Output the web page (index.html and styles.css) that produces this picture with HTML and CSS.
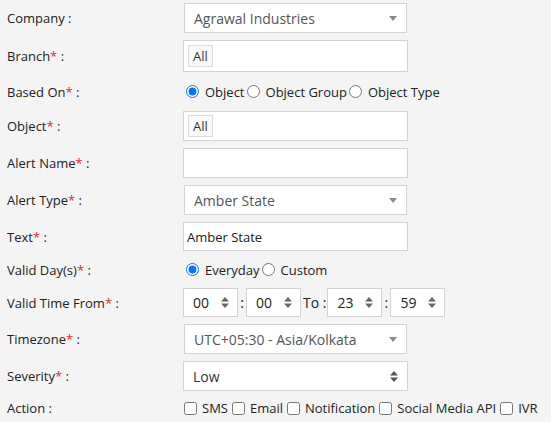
FILE: index.html
```html
<!DOCTYPE html>
<html>
<head>
<meta charset="utf-8">
<link rel="stylesheet" href="styles.css">
</head>
<body>
<form class="form">
  <div class="row h30">
    <span class="lbl">Company :</span>
    <div class="select"><span>Agrawal Industries</span><svg class="caret" width="8" height="5" viewBox="0 0 8 5"><path d="M0 0H8L4 5Z"/></svg></div>
  </div>
  <div class="row h32">
    <span class="lbl">Branch<span class="req">*</span> :</span>
    <div class="input tags"><span class="tag">All</span></div>
  </div>
  <div class="row h25">
    <span class="lbl">Based On<span class="req">*</span> :</span>
    <div class="choices">
      <label class="choice"><input type="radio" name="based" checked>Object</label>
      <label class="choice"><input type="radio" name="based">Object Group</label>
      <label class="choice"><input type="radio" name="based">Object Type</label>
    </div>
  </div>
  <div class="row h30">
    <span class="lbl">Object<span class="req">*</span> :</span>
    <div class="input tags"><span class="tag">All</span></div>
  </div>
  <div class="row h30">
    <span class="lbl">Alert Name<span class="req">*</span> :</span>
    <div class="input"></div>
  </div>
  <div class="row h30">
    <span class="lbl">Alert Type<span class="req">*</span> :</span>
    <div class="select"><span>Amber State</span><svg class="caret" width="8" height="5" viewBox="0 0 8 5"><path d="M0 0H8L4 5Z"/></svg></div>
  </div>
  <div class="row h29">
    <span class="lbl">Text<span class="req">*</span> :</span>
    <div class="input text">Amber State</div>
  </div>
  <div class="row h23">
    <span class="lbl">Valid Day(s)<span class="req">*</span> :</span>
    <div class="choices">
      <label class="choice"><input type="radio" name="day" checked>Everyday</label>
      <label class="choice"><input type="radio" name="day">Custom</label>
    </div>
  </div>
  <div class="row h29">
    <span class="lbl">Valid Time From<span class="req">*</span> :</span>
    <div class="time">
      <div class="num">00<svg class="spin" width="8" height="11" viewBox="0 0 8 11"><path d="M4 0L8 4.5H0Z M4 11L8 6.5H0Z"/></svg></div>
      <span class="sep">:</span>
      <div class="num">00<svg class="spin" width="8" height="11" viewBox="0 0 8 11"><path d="M4 0L8 4.5H0Z M4 11L8 6.5H0Z"/></svg></div>
      <span class="to">To :</span>
      <div class="num">23<svg class="spin" width="8" height="11" viewBox="0 0 8 11"><path d="M4 0L8 4.5H0Z M4 11L8 6.5H0Z"/></svg></div>
      <span class="sep">:</span>
      <div class="num">59<svg class="spin" width="8" height="11" viewBox="0 0 8 11"><path d="M4 0L8 4.5H0Z M4 11L8 6.5H0Z"/></svg></div>
    </div>
  </div>
  <div class="row h30">
    <span class="lbl">Timezone<span class="req">*</span> :</span>
    <div class="select"><span>UTC+05:30 - Asia/Kolkata</span><svg class="caret" width="8" height="5" viewBox="0 0 8 5"><path d="M0 0H8L4 5Z"/></svg></div>
  </div>
  <div class="row h30">
    <span class="lbl">Severity<span class="req">*</span> :</span>
    <div class="input native"><span>Low</span><svg class="spin dark" width="8" height="11" viewBox="0 0 8 11"><path d="M4 0L8 4.5H0Z M4 11L8 6.5H0Z"/></svg></div>
  </div>
  <div class="row h20">
    <span class="lbl">Action :</span>
    <div class="choices checks">
      <label class="choice"><input type="checkbox">SMS</label>
      <label class="choice"><input type="checkbox">Email</label>
      <label class="choice"><input type="checkbox">Notification</label>
      <label class="choice"><input type="checkbox">Social Media API</label>
      <label class="choice"><input type="checkbox">IVR</label>
    </div>
  </div>
</form>
</body>
</html>
```
FILE: styles.css
```css
html, body {
  margin: 0;
  padding: 0;
  background: #f4f4f4;
}
body {
  font-family: "Open Sans", "Liberation Sans", sans-serif;
  font-size: 13px;
  color: #222;
}
.form {
  display: flex;
  flex-direction: column;
  gap: 7px;
  padding-top: 3px;
}
.row {
  display: flex;
  align-items: center;
}
.h20 { height: 20px; }
.h23 { height: 23px; }
.h25 { height: 25px; }
.h29 { height: 29px; }
.h30 { height: 30px; }
.h32 { height: 32px; }
.lbl {
  width: 176px;
  padding-left: 7px;
  flex: none;
  white-space: nowrap;
}
.req { color: #e0262a; }
.select, .input {
  box-sizing: border-box;
  height: 100%;
  background: #fff;
  border: 1px solid #d2d2d2;
  display: flex;
  align-items: center;
}
.select {
  width: 223px;
  margin-left: 1px;
  padding: 0 9px 0 9px;
  font-size: 14px;
  color: #555;
  justify-content: space-between;
}
.caret { fill: #8a8a8a; margin-top: 1px; }
.input {
  width: 225px;
}
.input.text {
  padding-left: 3px;
  color: #1a1a1a;
}
.input.native {
  padding: 0 9px;
  font-size: 14px;
  color: #333;
  justify-content: space-between;
}
.tags { padding-left: 4px; }
.tag {
  box-sizing: border-box;
  height: 22px;
  padding: 0 4px;
  border: 1px solid #dcdcdc;
  background: #fafafa;
  display: flex;
  align-items: center;
  color: #333;
}
.choices {
  display: flex;
  align-items: center;
}
.choice {
  display: flex;
  align-items: center;
  white-space: nowrap;
}
.choice input {
  margin: 0 6px 0 3px;
}
.choice + .choice input {
  margin-left: 2px;
}
.choices.checks .choice input {
  margin: 0 5px 0 1px;
}
.choices.checks .choice + .choice input {
  margin-left: 4px;
}
.time {
  display: flex;
  align-items: center;
  height: 100%;
}
.num {
  box-sizing: border-box;
  width: 55px;
  height: 100%;
  background: #fff;
  border: 1px solid #d2d2d2;
  display: flex;
  align-items: center;
  justify-content: space-between;
  padding: 0 8px 0 9px;
  font-size: 14px;
  color: #222;
}
.spin { fill: #666; }
.spin.dark { fill: #555; }
.sep {
  width: 8px;
  text-align: center;
  font-size: 14px;
}
.to {
  padding: 0 1px 0 2px;
  font-size: 14px;
}
```
